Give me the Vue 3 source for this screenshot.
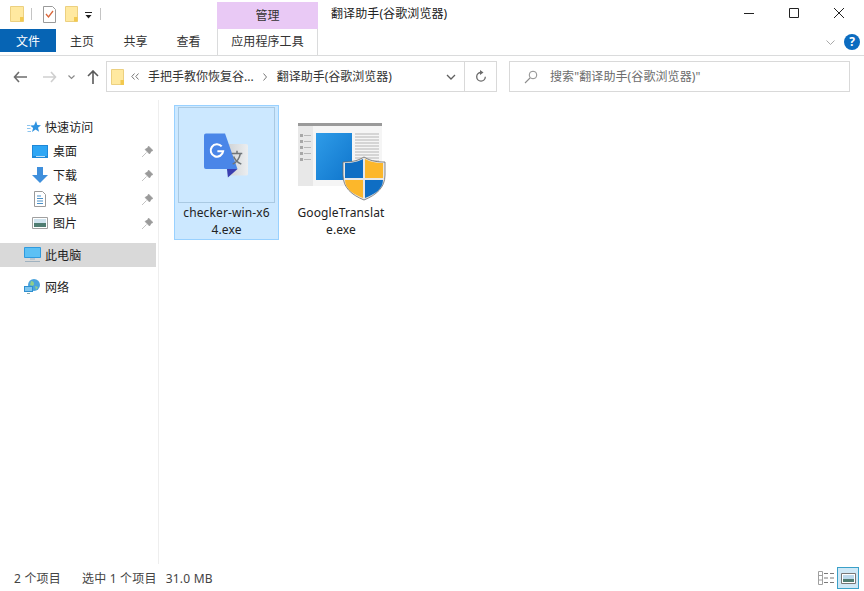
<script setup>
const quick = [
  { name: '桌面', icon: 'desk' },
  { name: '下载', icon: 'down' },
  { name: '文档', icon: 'doc' },
  { name: '图片', icon: 'pic' },
]
</script>

<template>
  <div class="win">
    <header class="title">
      <div class="qat">
        <svg class="qi first" width="14" height="16" viewBox="0 0 14 16"><path d="M.5.5h13v15H.5z" fill="#ffe9a0" stroke="#ecd080"/><path d="M10 11h3.500v4.500H10z" fill="#f2c94f"/></svg>
        <span class="tick"></span>
        <svg class="qi" width="13" height="17" viewBox="0 0 13 17"><path d="M.5.5h9l3 3v13H.5z" fill="#fff" stroke="#9a9a9a"/><path d="M3 8l2.500 3L10 5" fill="none" stroke="#d9663a" stroke-width="1.300"/></svg>
        <svg class="qi" width="13" height="16" viewBox="0 0 13 16"><path d="M.5.5h12v15H.5z" fill="#ffe9a0" stroke="#ecd080"/><path d="M9 11h3.500v4.500H9z" fill="#f2c94f"/></svg>
        <svg class="qi caret" width="7" height="7" viewBox="0 0 7 7"><path d="M0 0h7v1H0zM.5 3h6L3.500 6.500z" fill="#222"/></svg>
        <span class="tick"></span>
      </div>
      <div class="manage">管理</div>
      <div class="wintitle">翻译助手(谷歌浏览器)</div>
      <div class="winbtns">
        <svg width="12" height="12" viewBox="0 0 12 12"><path d="M1 6.500h10" stroke="#222"/></svg>
        <svg width="12" height="12" viewBox="0 0 12 12"><path d="M1.500 1.500h9v9h-9z" fill="none" stroke="#222"/></svg>
        <svg width="12" height="12" viewBox="0 0 12 12"><path d="M1 1l10 10M11 1L1 11" stroke="#222"/></svg>
      </div>
    </header>

    <nav class="tabs">
      <div class="tab file">文件</div>
      <div class="tab home">主页</div>
      <div class="tab share">共享</div>
      <div class="tab view">查看</div>
      <div class="tab tool">应用程序工具</div>
      <div class="ribbonend">
        <svg width="9" height="5" viewBox="0 0 9 5"><path d="M.5.500l4 4 4-4" fill="none" stroke="#a9a9a9"/></svg>
        <span class="help">?</span>
      </div>
    </nav>

    <div class="addrrow">
      <div class="navbtns">
        <svg width="14" height="12" viewBox="0 0 14 12"><path d="M6 1L1.500 6 6 11M2 6h12" fill="none" stroke="#6d6d6d" stroke-width="1.600"/></svg>
        <svg width="14" height="12" viewBox="0 0 14 12"><path d="M8 1l4.500 5L8 11M12 6H0" fill="none" stroke="#cfcfcf" stroke-width="1.600"/></svg>
        <svg width="7" height="5" viewBox="0 0 7 5"><path d="M.5.500l3 3 3-3" fill="none" stroke="#8a8a8a" stroke-width="1.200"/></svg>
        <svg width="12" height="14" viewBox="0 0 12 14"><path d="M1 6l5-5 5 5M6 1.500V14" fill="none" stroke="#5a5a5a" stroke-width="1.600"/></svg>
      </div>
      <div class="addr">
        <svg class="afolder" width="13" height="16" viewBox="0 0 13 16"><path d="M.5.500h12v15H.5z" fill="#ffe9a0" stroke="#ecd080"/><path d="M9.500 11H13v5H9.500z" fill="#f2c94f"/></svg>
        <svg class="chev" width="8" height="7" viewBox="0 0 8 7"><path d="M3.500.500L.8 3.500l2.700 3M7.500.500L4.800 3.500l2.700 3" fill="none" stroke="#777"/></svg>
        <span class="crumb">手把手教你恢复谷...</span>
        <svg class="sep" width="4" height="8" viewBox="0 0 4 8"><path d="M.5.500l3 3.500-3 3.500" fill="none" stroke="#777"/></svg>
        <span class="crumb">翻译助手(谷歌浏览器)</span>
        <span class="grow"></span>
        <svg class="drop" width="10" height="6" viewBox="0 0 10 6"><path d="M1 1l4 4 4-4" fill="none" stroke="#5f5f5f" stroke-width="1.300"/></svg>
        <span class="refresh">
          <svg width="12" height="13" viewBox="0 0 12 13"><path d="M6 2.500a4.300 4.300 0 1 0 4.300 4.300" fill="none" stroke="#6a6a6a" stroke-width="1.300"/><path d="M5 0l3.500 2.500L5 5z" fill="#6a6a6a"/></svg>
        </span>
      </div>
      <div class="search">
        <svg width="14" height="14" viewBox="0 0 14 14"><circle cx="9" cy="5" r="3.800" fill="none" stroke="#8d8d8d"/><path d="M6 8L1 13" stroke="#8d8d8d" stroke-width="1.100"/></svg>
        <span class="hint">搜索"翻译助手(谷歌浏览器)"</span>
      </div>
    </div>

    <main class="body">
      <aside class="side">
        <div class="row head">
          <svg width="14" height="13" viewBox="0 0 14 13"><path d="M9 0l1.300 4 3.700.2-3 2.500 1.100 4.100L8.500 8.500 5 11l1.100-4.100L3.200 4.400l3.900-.2z" fill="#2f93e0"/><path d="M0 4.500h3M0 7.500h3.500M.5 10.500h3.500" stroke="#8cc4ee"/></svg>
          <span>快速访问</span>
        </div>
        <div v-for="q in quick" :key="q.name" class="row sub">
          <span class="ico">
            <svg v-if="q.icon === 'desk'" width="16" height="13" viewBox="0 0 16 13"><path d="M0 0h16v13H0z" fill="#1e88d8"/><path d="M1 1h14v10H1z" fill="#2ea6f4"/><path d="M4 11.500h9" stroke="#bfe0f6"/></svg>
            <svg v-else-if="q.icon === 'down'" width="16" height="16" viewBox="0 0 16 16"><path d="M5 0h6v8h5l-8 8-8-8h5z" fill="#3f8fdc"/></svg>
            <svg v-else-if="q.icon === 'doc'" width="12" height="16" viewBox="0 0 12 16"><path d="M.5.500h8l3 3v12H.5z" fill="#fff" stroke="#9a9a9a"/><path d="M3 5h4M3 7.500h6M3 10h6M3 12.500h6" stroke="#4a90c8"/></svg>
            <svg v-else width="16" height="12" viewBox="0 0 16 12"><path d="M.5.500h15v11H.5z" fill="#fff" stroke="#a0a0a0"/><path d="M2 2h12v4H2z" fill="#cfe3ee"/><path d="M2 6h12v4H2z" fill="#4f7d72"/></svg>
          </span>
          <span class="lbl">{{ q.name }}</span>
          <svg class="pin" width="11" height="11" viewBox="0 0 11 11"><path d="M6.500 0L11 4.500 9.500 5 7.500 8 3 3.500l3-2zM4.500 6.500L0 11" fill="#9a9a9a" stroke="#9a9a9a" stroke-width=".6"/></svg>
        </div>
        <div class="row pc">
          <svg width="17" height="16" viewBox="0 0 17 16"><path d="M.5.500h16v10H.5z" fill="#5cc0f4" stroke="#2f9ade"/><path d="M6 11h5v2H6z" fill="#b6c6d2"/><path d="M1 14.500h15" stroke="#9fb2c0"/></svg>
          <span>此电脑</span>
        </div>
        <div class="row net">
          <svg width="17" height="16" viewBox="0 0 17 16"><circle cx="10" cy="6" r="6" fill="#4aa3dc"/><path d="M7 2c2 0 3 1 3 3s-2 2-4 1zM11 7l3 1-2 3z" fill="#8fcf8a"/><path d="M0 7h9v6H0z" fill="#2f8fd0"/><path d="M1 8h7v4H1z" fill="#7fc6ee"/><path d="M3 14h3v1H3z" fill="#8aa"/></svg>
          <span>网络</span>
        </div>
      </aside>

      <section class="files">
        <figure class="item selected">
          <div class="thumb">
            <svg width="44" height="45" viewBox="0 0 46 46">
              <defs>
                <linearGradient id="panel" x1="0" y1="0" x2="1" y2="0"><stop offset="0" stop-color="#cfd3d6"/><stop offset="1" stop-color="#eceef0"/></linearGradient>
              </defs>
              <path d="M25 11h19a2 2 0 0 1 2 2v29a2 2 0 0 1-2 2H27z" fill="url(#panel)"/>
              <path d="M2 0h20l13 37H2a2 2 0 0 1-2-2V2a2 2 0 0 1 2-2z" fill="#4a86e8"/>
              <path d="M24 37h11l-10 9z" fill="#3a3fb0"/>
              <path d="M18.500 13.500a6.500 6.500 0 1 0 1.500 5h-6" fill="none" stroke="#fff" stroke-width="2.200"/>
              <path d="M29 21h11M34.500 18v3M38 21c-1 5-4 9-8 11M31 24c1 3 4 6 8 8" fill="none" stroke="#6f7579" stroke-width="1.600"/>
            </svg>
          </div>
          <figcaption>checker-win-x64.exe</figcaption>
        </figure>
        <figure class="item plain">
          <div class="thumb">
            <svg width="88" height="78" viewBox="0 0 88 78">
              <defs>
                <linearGradient id="pane" x1="0" y1="0" x2="1" y2="1"><stop offset="0" stop-color="#2f9ce8"/><stop offset="1" stop-color="#0f75cc"/></linearGradient>
              </defs>
              <path d="M0 0h84v63H0z" fill="#f5f5f5"/>
              <path d="M0 0h84v3H0z" fill="#9a9a9a"/>
              <path d="M0 3h15v60H0z" fill="#e8e8e8"/>
              <path d="M2 11h3v3H2zM2 17h3v3H2zM2 23h3v3H2zM2 29h3v3H2zM2 35h3v3H2z" fill="#a8a8a8"/>
              <path d="M6 12.500h7M6 18.500h7M6 24.500h7M6 30.500h7M6 36.500h7" stroke="#b8b8b8"/>
              <path d="M18 10h36v47H18z" fill="url(#pane)"/>
              <path d="M57 11h24M57 14h24M57 17h24M57 20h24M57 23h24M57 26h24M57 29h24M57 32h24M57 35h24M57 38h24M57 41h24" stroke="#b5b5b5"/>
              <path d="M66 34c5 3 10 5 21 5v13c0 13-9 20-21 25-12-5-21-12-21-25V39c11 0 16-2 21-5z" fill="#e8e8e8" stroke="#6b6b6b" stroke-width=".8"/>
              <path d="M65 36c-4 2-9 4-18 4v15h18z" fill="#0f6ec4"/>
              <path d="M67 36c4 2 9 4 18 4v15H67z" fill="#fcb72b"/>
              <path d="M47 57c0 9 8 14 18 18V57z" fill="#fcb72b"/>
              <path d="M67 57h18c0 9-8 14-18 18z" fill="#0f6ec4"/>
            </svg>
          </div>
          <figcaption>GoogleTranslate.exe</figcaption>
        </figure>
      </section>
    </main>

    <footer class="status">
      <span>2 个项目</span>
      <span class="s2">选中 1 个项目</span>
      <span class="s3">31.0 MB</span>
      <span class="grow"></span>
      <svg class="vdetail" width="16" height="14" viewBox="0 0 16 14"><path d="M.5.500h4v13h-4z" fill="none" stroke="#a0a0a0"/><path d="M.5 4.500h4M.5 9h4" stroke="#a0a0a0"/><path d="M6 2.500h4M12 2.500h4M6 7h4M12 7h4M6 11.500h4M12 11.500h4" stroke="#7a7a7a"/></svg>
      <span class="vlarge">
        <svg width="15" height="11" viewBox="0 0 15 11"><path d="M.5.500h14v10H.5z" fill="#fff" stroke="#777"/><path d="M2 2h11v4H2z" fill="#bcd9ec"/><path d="M2 6h11v3H2z" fill="#4f7d72"/></svg>
      </span>
    </footer>
  </div>
</template>

<style>
html, body { margin: 0; background: #fff; }
</style>

<style scoped>
.win {
  width: 864px;
  height: 591px;
  display: flex;
  flex-direction: column;
  overflow: hidden;
  background: #fff;
  color: #222;
  font-family: "Noto Sans", "Noto Sans CJK SC", sans-serif;
  font-size: 12px;
  letter-spacing: .1px;
}
.title { height: 29px; display: flex; flex: none; }
.qat { width: 217px; display: flex; align-items: center; padding: 0 0 1px 10px; box-sizing: border-box; }
.qi { display: block; flex: none; }
.first { margin-right: 7px; }
.tick { width: 1px; height: 12px; background: #c4c4c4; flex: none; }
.qat .tick:nth-child(2) { margin-right: 11px; }
.qat .tick:last-child { margin-left: 8px; }
.qi:nth-child(3) { margin-right: 9px; }
.caret { margin-left: 7px; margin-top: 3px; }
.manage {
  width: 101px; margin-top: 2px; background: #e9c9f5; text-align: center; line-height: 27px; color: #333; flex: none;
}
.wintitle { padding: 0 0 0 13px; line-height: 27px; color: #222; }
.winbtns {
  margin-left: auto; width: 121px; display: flex; justify-content: space-between; align-items: center;
  padding-right: 19px; padding-bottom: 3px; box-sizing: border-box;
}
.tabs {
  height: 27px; flex: none; display: flex; box-sizing: border-box; border-bottom: 1px solid #dadbdc;
}
.tab { height: 23px; line-height: 25px; text-align: center; color: #333; width: 47px; }
.tab.file { width: 56px; background: #0664b4; color: #fff; }
.tab.home { margin-left: 3px; width: 46px; }
.tab.share { margin-left: 7px; }
.tab.view { margin-left: 6px; }
.tab.tool {
  width: 101px; margin-left: 5px; border-left: 1px solid #dadbdc; border-right: 1px solid #dadbdc; box-sizing: border-box; height: 26px;
}
.ribbonend { margin-left: auto; display: flex; align-items: center; gap: 9px; padding: 0 4px 0 0; height: 26px; box-sizing: border-box; }
.help {
  width: 16px; height: 16px; border-radius: 50%; background: #0c6cc0; color: #fff; font-weight: 700; font-size: 12px;
  text-align: center; line-height: 16px; letter-spacing: 0;
}
.addrrow { height: 44px; flex: none; display: flex; align-items: center; padding-bottom: 3px; box-sizing: border-box; }
.navbtns { width: 106px; flex: none; display: flex; align-items: center; padding-left: 13px; box-sizing: border-box; padding-top: 1px; }
.navbtns svg:nth-child(1) { margin-right: 16px; }
.navbtns svg:nth-child(2) { margin-right: 11px; }
.navbtns svg:nth-child(3) { margin-right: 12px; }
.addr {
  width: 391px; height: 31px; box-sizing: border-box; border: 1px solid #d9d9d9; display: flex; align-items: center; padding-left: 4px; color: #333; flex: none;
}
.crumb { padding-bottom: 2px; letter-spacing: 0; }
.hint { padding-bottom: 2px; }
.afolder { margin-right: 7px; }
.chev { margin-right: 9px; flex: none; }
.sep { margin: 0 10px 0 9px; flex: none; }
.grow { flex: 1; }
.drop { margin-right: 8px; }
.refresh { width: 31px; align-self: stretch; border-left: 1px solid #d9d9d9; display: flex; align-items: center; justify-content: center; }
.search {
  margin-left: 12px; width: 341px; height: 31px; box-sizing: border-box; border: 1px solid #d9d9d9; display: flex; align-items: center;
  padding-left: 14px; gap: 12px; color: #6d6d6d; flex: none;
}
.body { flex: 1; display: flex; min-height: 0; }
.side { width: 159px; flex: none; box-sizing: border-box; border-right: 1px solid #eee; padding-top: 15px; }
.row { height: 24px; display: flex; align-items: center; width: 156px; box-sizing: border-box; }
.head { padding-left: 27px; gap: 4px; }
.sub { padding-left: 32px; }
.ico { width: 16px; display: flex; justify-content: center; margin-right: 5px; }
.lbl { flex: 1; }
.pin { margin-right: 3px; }
.pc { margin-top: 8px; background: #d9d9d9; padding-left: 24px; gap: 4px; }
.net { margin-top: 8px; padding-left: 24px; gap: 4px; }
.files { flex: 1; display: flex; align-items: flex-start; padding: 5px 0 0 15px; gap: 13px; }
.item { margin: 0; width: 105px; box-sizing: border-box; flex: none; }
.item.selected { background: #cce8ff; border: 1px solid #99d1ff; height: 135px; padding: 1px 3px 0; }
.thumb { height: 96px; box-sizing: border-box; display: flex; align-items: center; justify-content: center; }
.selected .thumb { border: 1px solid #a9c9e2; padding-right: 2px; }
.plain { padding-top: 18px; width: 98px; height: 135px; }
.plain .thumb { height: 78px; padding-left: 2px; }
figcaption {
  width: 96px; margin: 0 auto; text-align: center; line-height: 17px; color: #222; word-break: break-all; font-size: 12px; padding-top: 1px; letter-spacing: .12px;
}
.plain figcaption { padding-top: 3px; }
.status { height: 27px; flex: none; display: flex; align-items: center; padding: 1px 5px 0 14px; box-sizing: border-box; color: #444; letter-spacing: .2px; }
.s2 { margin-left: 21px; }
.s3 { margin-left: 9px; }
.vdetail { margin-right: 3px; }
.vlarge {
  width: 22px; height: 22px; box-sizing: border-box; border: 1px solid #3aa0c8; background: #cfe8f6; display: flex; align-items: center; justify-content: center;
}
</style>
